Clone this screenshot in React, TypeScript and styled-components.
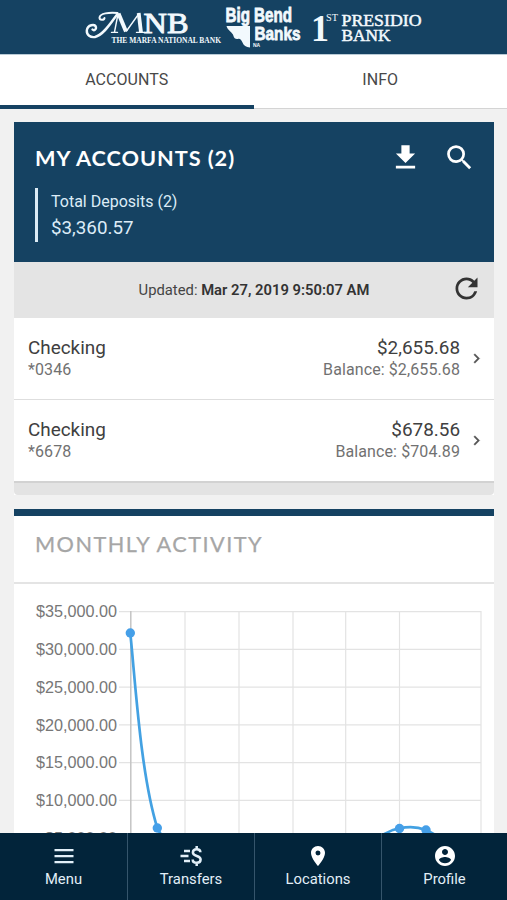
import React from "react";
import styled, { createGlobalStyle } from "styled-components";

const navy = "#154262";
const sans = `Roboto, "Liberation Sans", sans-serif`;

const GlobalStyle = createGlobalStyle`
  * { box-sizing: border-box; }
  body { margin: 0; background: #f1f1f1; font-family: ${sans}; color: #3c3c3c; }
  button { border: 0; padding: 0; margin: 0; background: none; font: inherit; color: inherit; }
  svg { display: block; flex: none; }
`;

const Screen = styled.div`
  width: 507px;
  height: 900px;
  display: flex;
  flex-direction: column;
  overflow: hidden;
  background: #f1f1f1;
`;

const BrandBar = styled.header`
  height: 54px;
  flex: none;
  background: ${navy};
`;

const Tabs = styled.nav`
  height: 55px;
  flex: none;
  display: flex;
  background: #fff;
  border-top: 1px solid #b9cbd6;
`;

const Tab = styled.button<{ $active?: boolean }>`
  flex: 1;
  font-size: 16px;
  line-height: 20px;
  letter-spacing: 0.05px;
  color: #484848;
  border-bottom: ${(p) => (p.$active ? `4px solid ${navy}` : "1px solid #d4d4d4")};
  padding-bottom: ${(p) => (p.$active ? "1px" : "4px")};
`;

const Content = styled.main`
  flex: 1;
  min-height: 0;
  overflow: hidden;
  display: flex;
  flex-direction: column;
  gap: 14px;
  padding: 13px 13px 0 14px;
`;

const Card = styled.section`
  flex: none;
  background: #fff;
`;

const AccountsHeader = styled.div`
  height: 140px;
  padding: 19px 18px 0 21px;
  background: ${navy};
  color: #fff;
`;

const TitleRow = styled.div`
  height: 33px;
  display: flex;
  align-items: center;
  justify-content: space-between;
`;

const Title = styled.h2<{ $muted?: boolean }>`
  margin: 0;
  font-family: Lato, sans-serif;
  font-weight: ${(p) => (p.$muted ? 400 : 700)};
  font-size: 21.7px;
  line-height: 30px;
  letter-spacing: ${(p) => (p.$muted ? "1.45px" : "0.95px")};
  color: ${(p) => (p.$muted ? "#a6a6a6" : "#fff")};
  -webkit-text-stroke: ${(p) => (p.$muted ? "0.25px #a6a6a6" : "0")};
  white-space: nowrap;
`;

const Actions = styled.div`
  display: flex;
  gap: 21px;
`;

const Totals = styled.div`
  height: 54px;
  margin-top: 14px;
  padding-left: 13px;
  border-left: 3px solid #dcebf5;
  color: #dcecf7;
`;

const TotalLabel = styled.div`
  font-size: 16px;
  line-height: 27px;
`;

const TotalValue = styled.div`
  font-size: 18.8px;
  line-height: 27px;
`;

const UpdatedBar = styled.div`
  height: 56px;
  display: flex;
  align-items: center;
  padding: 0 11px 3px 44px;
  background: #e4e4e4;
  font-size: 14.8px;
  color: #444;
`;

const UpdatedText = styled.div`
  flex: 1;
  text-align: center;
  padding-top: 3px;
  b { font-weight: 600; color: #333; }
`;

const AccountRow = styled.div`
  height: 82px;
  display: flex;
  align-items: center;
  padding: 0 8px 0 14px;
  border-bottom: 1px solid #dedede;
  & + & { height: 81px; border-bottom: 0; }
`;

const AccountCell = styled.div<{ $right?: boolean }>`
  ${(p) => (p.$right ? "text-align: right; margin-left: auto; margin-right: 7px;" : "")}
`;

const Primary = styled.div`
  font-size: 18.9px;
  line-height: 23px;
  color: #404040;
`;

const Secondary = styled.div`
  font-size: 16px;
  line-height: 22px;
  letter-spacing: 0.1px;
  color: #717171;
`;

const CardFooter = styled.div`
  height: 14px;
  background: #e3e3e3;
  border-top: 2px solid #d2d2d2;
  border-radius: 0 0 4px 4px;
`;

const ActivityHeader = styled.div`
  height: 75px;
  border-top: 7px solid ${navy};
  border-bottom: 2px solid #e4e4e4;
  padding: 13px 21px;
`;

const BottomNav = styled.nav`
  height: 67px;
  flex: none;
  display: grid;
  grid-template-columns: 128px 127px 127px 125px;
  background: #02243a;
  color: #e2eff8;
`;

const NavItem = styled.button`
  display: flex;
  flex-direction: column;
  align-items: center;
  padding-top: 11px;
  font-size: 14.8px;
  line-height: 20px;
  border-right: 1px solid #35556b;
  &:last-child { border-right: 0; }
  span { margin-top: 1px; }
`;

const paths = {
  download: "M19 9h-4V3H9v6H5l7 7 7-7zM5 18v2h14v-2H5z",
  search:
    "M15.5 14h-.79l-.28-.27A6.471 6.471 0 0 0 16 9.5 6.5 6.5 0 1 0 9.5 16c1.61 0 3.09-.59 4.23-1.57l.27.28v.79l5 4.99L20.49 19l-4.99-5zm-6 0C7.01 14 5 11.99 5 9.5S7.01 5 9.5 5 14 7.01 14 9.5 11.99 14 9.5 14z",
  refresh:
    "M17.65 6.35A7.958 7.958 0 0 0 12 4c-4.42 0-7.99 3.58-7.99 8s3.57 8 7.99 8c3.73 0 6.84-2.55 7.73-6h-2.08A5.99 5.99 0 0 1 12 18c-3.31 0-6-2.69-6-6s2.69-6 6-6c1.66 0 3.14.69 4.22 1.78L13 11h7V4l-2.35 2.35z",
  chevron: "M10 6 8.59 7.41 13.17 12l-4.58 4.59L10 18l6-6z",
  menu: "M2.5 5h19v2.2h-19zM2.5 11h19v2.2h-19zM2.5 17h19v2.2h-19z",
  place:
    "M12 2C8.13 2 5 5.13 5 9c0 5.25 7 13 7 13s7-7.75 7-13c0-3.87-3.13-7-7-7zm0 9.5a2.5 2.5 0 0 1 0-5 2.5 2.5 0 0 1 0 5z",
  profile:
    "M12 2C6.48 2 2 6.48 2 12s4.48 10 10 10 10-4.48 10-10S17.52 2 12 2zm0 3c1.66 0 3 1.34 3 3s-1.34 3-3 3-3-1.34-3-3 1.34-3 3-3zm0 14.2a7.2 7.2 0 0 1-6-3.22c.03-1.99 4-3.08 6-3.08 1.99 0 5.97 1.09 6 3.08a7.2 7.2 0 0 1-6 3.22z",
};

function Icon({ name, size, color = "currentColor" }: { name: keyof typeof paths; size: number; color?: string }) {
  return (
    <svg width={size} height={size} viewBox="0 0 24 24" fill={color} stroke={color} strokeWidth={name === "chevron" ? 0.5 : 0}>
      <path d={paths[name]} />
    </svg>
  );
}

function TransfersIcon() {
  return (
    <svg width="24" height="24" viewBox="0 0 24 24" fill="none" stroke="currentColor" strokeWidth="2.5">
      <path d="M5 7h6M1.500 12h8M5 17h6" />
      <path d="M21.400 8.200c0-2-1.600-3-3.700-3s-3.800 1.200-3.800 3.300c0 4.500 7.700 2.500 7.700 7 0 2.200-1.700 3.300-3.900 3.300-2.400 0-4-1.200-4-3.400M17.700 2v3.200M17.700 18.800V22" />
    </svg>
  );
}

function BrandLogos() {
  return (
    <svg width="507" height="54" viewBox="0 0 507 54" fill="#f2f9fd">
      <g fontFamily="'Liberation Serif', serif" fontWeight="700">
        <text x="143.500" y="32.800" fontSize="29.500" textLength="45" lengthAdjust="spacingAndGlyphs" fontWeight="400" stroke="#f2f9fd" strokeWidth=".9">NB</text>
        <text x="111.500" y="43.200" fontSize="8.600" textLength="109.500" lengthAdjust="spacingAndGlyphs">THE MARFA NATIONAL BANK</text>
      </g>
      <g fill="none" stroke="#f2f9fd" strokeLinecap="round">
        <path d="M92.500 29.500C94 31 96.500 29.500 96 27.300C95 23.500 87.500 24.500 86.800 30.500C86.500 35 90.500 37.800 95 37C104 35 112 21 117.500 14" strokeWidth="2.400" />
        <path d="M117.500 13C109 12 100 13.500 99.500 17.500C99.500 20.500 104 20.500 104.500 18" strokeWidth="2" />
        <path d="M118.500 13.500L126 31.500" strokeWidth="4" strokeLinecap="butt" />
        <path d="M118 14L114.500 32M111.500 32.400h6M126.500 31L139 13.500M136.500 32.400h8" strokeWidth="1.400" />
        <path d="M138.700 13L141 32.500" strokeWidth="3.800" strokeLinecap="butt" />
      </g>
      <g fontFamily="'Liberation Sans', sans-serif" fontWeight="700" stroke="#f2f9fd" strokeWidth=".8">
        <text x="225.500" y="22" fontSize="19.500" textLength="66.500" lengthAdjust="spacingAndGlyphs">Big Bend</text>
        <text x="254.500" y="40.300" fontSize="18.500" textLength="46" lengthAdjust="spacingAndGlyphs">Banks</text>
        <text x="253" y="47.200" fontSize="5" stroke="none">NA</text>
      </g>
      <path d="M226.500 26H250V47.500C246 47 243.500 45.500 242.500 42.500C241.500 40 240 38.500 238.500 38.800C236 39.500 234 38.500 233.500 36C232.500 32 227.500 30.500 226.500 26Z" />
      <g fontFamily="'Liberation Serif', serif">
        <text x="311" y="41" fontSize="38" textLength="18" lengthAdjust="spacingAndGlyphs" fontWeight="700">1</text>
        <text x="326" y="21" fontSize="9.500" textLength="12" lengthAdjust="spacingAndGlyphs">ST</text>
        <text x="341.500" y="26.200" fontSize="17.500" textLength="80" lengthAdjust="spacingAndGlyphs" stroke="#f2f9fd" strokeWidth=".5">PRESIDIO</text>
        <text x="341.500" y="40.500" fontSize="17.500" textLength="49" lengthAdjust="spacingAndGlyphs" stroke="#f2f9fd" strokeWidth=".5">BANK</text>
      </g>
    </svg>
  );
}

const ticks = ["$35,000.00", "$30,000.00", "$25,000.00", "$20,000.00", "$15,000.00", "$10,000.00", "$5,000.00"];
const columns = [185, 239, 293, 345.7, 399.5, 481];
const points = [
  [130.3, 633],
  [157.3, 828],
  [399.5, 828.5],
  [426, 830],
];

function ActivityChart() {
  return (
    <svg width="480" height="260" viewBox="14 584 480 260">
      {ticks.map((label, i) => {
        const y = 611.7 + i * 37.75;
        return (
          <g key={label}>
            <path d={`M119 ${y}H481`} stroke="#e3e3e3" strokeWidth="1.2" />
            <text x="117" y={y + 5.7} textAnchor="end" fontFamily="'Liberation Sans', Arial, sans-serif" fontSize="16.2" fill="#777">
              {label}
            </text>
          </g>
        );
      })}
      {columns.map((x) => (
        <path key={x} d={`M${x} 611V844`} stroke="#e3e3e3" strokeWidth="1.2" />
      ))}
      <path d="M130.800 611V844" stroke="#c4c4c4" strokeWidth="1.5" />
      <g fill="none" stroke="#43a1e2" strokeWidth="2.7">
        <path d="M130.300 633C136 690 141 775 157.300 828Q162 838 170 843" />
        <path d="M370 842C382 836 390 829 399.500 828.500Q413 825 426 830Q436 834 444 843" />
      </g>
      {points.map(([x, y]) => (
        <circle key={x} cx={x} cy={y} r="4.700" fill="#459fe8" />
      ))}
    </svg>
  );
}

const accounts = [
  { name: "Checking", number: "*0346", available: "$2,655.68", balance: "$2,655.68" },
  { name: "Checking", number: "*6678", available: "$678.56", balance: "$704.89" },
];

export default function App() {
  return (
    <>
      <GlobalStyle />
      <Screen>
        <BrandBar>
          <BrandLogos />
        </BrandBar>
        <Tabs>
          <Tab $active>ACCOUNTS</Tab>
          <Tab>INFO</Tab>
        </Tabs>
        <Content>
          <Card>
            <AccountsHeader>
              <TitleRow>
                <Title>MY ACCOUNTS (2)</Title>
                <Actions>
                  <Icon name="download" size={33} />
                  <Icon name="search" size={33} />
                </Actions>
              </TitleRow>
              <Totals>
                <TotalLabel>Total Deposits (2)</TotalLabel>
                <TotalValue>$3,360.57</TotalValue>
              </Totals>
            </AccountsHeader>
            <UpdatedBar>
              <UpdatedText>
                Updated: <b>Mar 27, 2019 9:50:07 AM</b>
              </UpdatedText>
              <Icon name="refresh" size={33} color="#333" />
            </UpdatedBar>
            {accounts.map((a) => (
              <AccountRow key={a.number}>
                <AccountCell>
                  <Primary>{a.name}</Primary>
                  <Secondary>{a.number}</Secondary>
                </AccountCell>
                <AccountCell $right>
                  <Primary>{a.available}</Primary>
                  <Secondary>Balance: {a.balance}</Secondary>
                </AccountCell>
                <Icon name="chevron" size={19} color="#555" />
              </AccountRow>
            ))}
            <CardFooter />
          </Card>
          <Card>
            <ActivityHeader>
              <Title $muted>MONTHLY ACTIVITY</Title>
            </ActivityHeader>
            <ActivityChart />
          </Card>
        </Content>
        <BottomNav>
          <NavItem>
            <Icon name="menu" size={24} />
            <span>Menu</span>
          </NavItem>
          <NavItem>
            <TransfersIcon />
            <span>Transfers</span>
          </NavItem>
          <NavItem>
            <Icon name="place" size={24} color="#fff" />
            <span>Locations</span>
          </NavItem>
          <NavItem>
            <Icon name="profile" size={24} color="#fff" />
            <span>Profile</span>
          </NavItem>
        </BottomNav>
      </Screen>
    </>
  );
}
